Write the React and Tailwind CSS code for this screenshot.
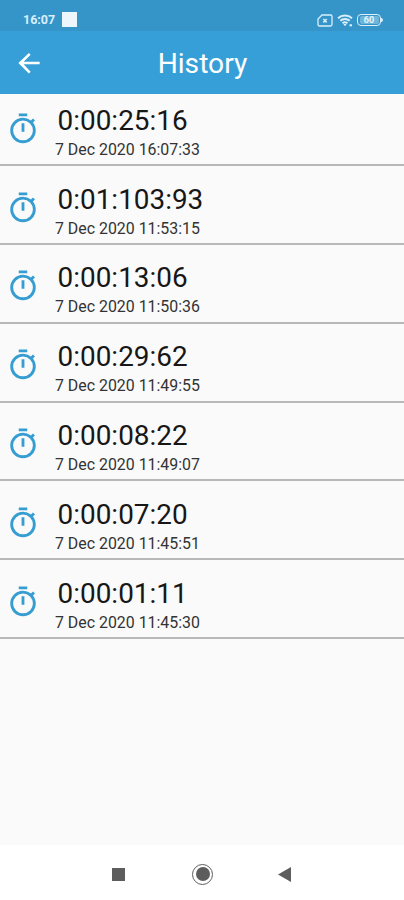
import React from 'react';

const entries = [
  { time: '0:00:25:16', date: '7 Dec 2020 16:07:33' },
  { time: '0:01:103:93', date: '7 Dec 2020 11:53:15' },
  { time: '0:00:13:06', date: '7 Dec 2020 11:50:36' },
  { time: '0:00:29:62', date: '7 Dec 2020 11:49:55' },
  { time: '0:00:08:22', date: '7 Dec 2020 11:49:07' },
  { time: '0:00:07:20', date: '7 Dec 2020 11:45:51' },
  { time: '0:00:01:11', date: '7 Dec 2020 11:45:30' },
];

function TimerIcon() {
  return (
    <svg viewBox="0 0 24 24" className="h-[34px] w-[34px] shrink-0 fill-[#359dd2]">
      <path d="M9 1h6v2H9zM11 8h2v6h-2z" />
      <path d="M19.03 7.39l1.42-1.42c-.43-.51-.9-.99-1.41-1.41l-1.42 1.42A8.96 8.96 0 0 0 12 4a9 9 0 1 0 9 9c0-2.12-.74-4.07-1.97-5.61zM12 20a7 7 0 1 1 0-14 7 7 0 0 1 0 14z" />
    </svg>
  );
}

function StatusBar() {
  return (
    <div className="flex h-[31px] shrink-0 items-center bg-[#3595c9] pt-2 pr-[21px] pl-[23px] text-[#d9effa]">
      <span className="text-[12.5px] leading-4 font-bold">16:07</span>
      <span className="ml-[7px] h-[15px] w-[15px] bg-[#edf7fb]" />
      <div className="ml-auto flex items-center pt-px">
        {/* SIM missing */}
        <svg viewBox="0 0 16 13" className="h-[13px] w-4" fill="none" stroke="currentColor" strokeWidth="1.3">
          <path d="M5 1h8.5a1.5 1.5 0 0 1 1.5 1.5v8a1.5 1.5 0 0 1-1.5 1.5h-11A1.5 1.5 0 0 1 1 10.5V5z" />
          <path d="M6.3 5l3.4 3.5M9.7 5L6.3 8.5" strokeWidth="1.6" />
        </svg>
        {/* Wifi */}
        <svg viewBox="0 0 17 13" className="ml-1 h-[13px] w-[17px]" fill="none" stroke="currentColor" strokeWidth="2">
          <path d="M1 4.2a10.5 10.5 0 0 1 14 0M3.3 6.8a7 7 0 0 1 9.4 0M5.6 9.2a3.7 3.7 0 0 1 4.8 0" />
          <path d="M6.3 10h3.4L8 12.2z" fill="currentColor" stroke="none" />
          <path d="M12.5 11.3h2.5" />
        </svg>
        {/* Battery */}
        <div className="ml-[3px] flex items-center">
          <span className="flex h-[12px] w-[24px] items-center justify-center rounded-[4px] border-[1.5px] border-current">
            <span className="flex h-[8px] w-[19px] items-center justify-center rounded-[2px] bg-[#6fb5da] text-[9px] leading-none font-bold text-[#e6f5fc]">60</span>
          </span>
          <span className="h-[4px] w-[2px] rounded-r-sm bg-current" />
        </div>
      </div>
    </div>
  );
}

function Header() {
  return (
    <header className="grid h-[63px] shrink-0 grid-cols-[1fr_auto_1fr] items-center bg-[#379fd8] pl-[14px] text-white">
      <button type="button" aria-label="Back" className="flex">
        <svg viewBox="0 0 24 24" className="h-[30px] w-[30px]" fill="currentColor">
          <path d="M20.5 11H7.7l5.6-5.6L11.9 4 3.5 12l8.4 8.3 1.4-1.4L7.7 13h12.800z" />
        </svg>
      </button>
      <h1 className="mr-[13px] mt-[3px] text-[28.2px] leading-8">History</h1>
    </header>
  );
}

function HistoryRow({ time, date }) {
  return (
    <li className="flex h-[78.8px] border-b-2 border-[#b8b8b8] pt-[16.5px] pl-[6px]">
      <div className="pt-[8px]">
        <TimerIcon />
      </div>
      <div className="ml-[15px]">
        <div className="pl-[2.6px] text-[27.9px] leading-[34px] text-[#171717]">{time}</div>
        <div className="pt-px text-[15.9px] leading-[22px] text-[#333333]">{date}</div>
      </div>
    </li>
  );
}

function NavBar() {
  return (
    <nav className="flex h-[55px] shrink-0 items-center bg-white pt-[3px] pl-[112px] text-[#5d5d5d]">
      <span className="h-[13px] w-[13px] bg-current" />
      <span className="ml-[67px] flex h-[21px] w-[21px] items-center justify-center rounded-full border-[1.5px] border-current">
        <span className="h-[14px] w-[14px] rounded-full bg-current" />
      </span>
      <svg viewBox="0 0 13 15" className="ml-[65px] h-[15px] w-[13px]" fill="currentColor">
        <path d="M13 0v15L0 7.5z" />
      </svg>
    </nav>
  );
}

function App() {
  return (
    <div className="flex h-[900px] w-[404px] flex-col overflow-hidden bg-[#fafafa] font-[Roboto,sans-serif]">
      <StatusBar />
      <Header />
      <main className="flex-1 overflow-hidden">
        <ul className="-mt-[6.7px]">
          {entries.map((entry) => (
            <HistoryRow key={entry.date} time={entry.time} date={entry.date} />
          ))}
        </ul>
      </main>
      <NavBar />
    </div>
  );
}

export default App;
